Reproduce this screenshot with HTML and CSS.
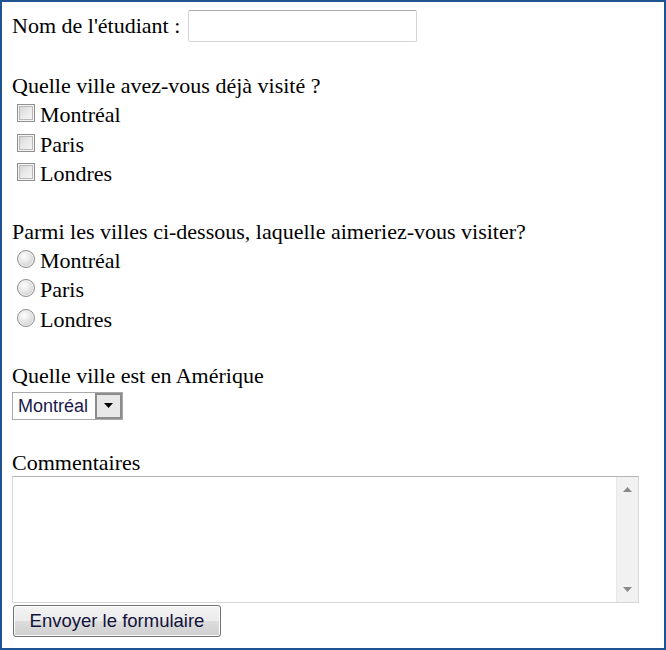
FILE: index.html
```html
<!DOCTYPE html>
<html lang="fr">
<head>
<meta charset="utf-8">
<title>Formulaire</title>
<link rel="stylesheet" href="styles.css">
</head>
<body>
<form class="frame">
  <div class="row-name">
    <label class="lbl" for="nom">Nom de l'étudiant :</label>
    <input class="txt" id="nom" type="text">
  </div>

  <div class="group g1">
    <div class="q">Quelle ville avez-vous déjà visité ?</div>
    <label class="opt"><input class="cb" type="checkbox"><span>Montréal</span></label>
    <label class="opt"><input class="cb" type="checkbox"><span>Paris</span></label>
    <label class="opt"><input class="cb" type="checkbox"><span>Londres</span></label>
  </div>

  <div class="group g2">
    <div class="q">Parmi les villes ci-dessous, laquelle aimeriez-vous visiter?</div>
    <label class="opt"><input class="rd" type="radio" name="v"><span>Montréal</span></label>
    <label class="opt"><input class="rd" type="radio" name="v"><span>Paris</span></label>
    <label class="opt"><input class="rd" type="radio" name="v"><span>Londres</span></label>
  </div>

  <div class="group g3">
    <div class="q">Quelle ville est en Amérique</div>
    <div class="sel">
      <select class="sel-input">
        <option>Montréal</option>
        <option>Paris</option>
        <option>Londres</option>
      </select>
      <span class="sel-btn"><svg width="9" height="5" viewBox="0 0 9 5"><path d="M0 0H9L4.5 5Z" fill="#000"/></svg></span>
    </div>
  </div>

  <div class="group g4">
    <div class="q q-short">Commentaires</div>
    <div class="ta">
      <textarea class="ta-input"></textarea>
      <div class="ta-bar">
        <svg width="9" height="5" viewBox="0 0 9 5"><path d="M0 5H9L4.5 0Z" fill="#8a8a8a"/></svg>
        <svg width="9" height="5" viewBox="0 0 9 5"><path d="M0 0H9L4.5 5Z" fill="#8a8a8a"/></svg>
      </div>
    </div>
  </div>

  <div class="actions">
    <button class="btn" type="button">Envoyer le formulaire</button>
  </div>
</form>
</body>
</html>
```

FILE: styles.css
```css
html, body {
  margin: 0;
  padding: 0;
  background: #fff;
}

.frame {
  box-sizing: border-box;
  width: 666px;
  height: 650px;
  border: 2px solid #205391;
  padding: 8px 10px 0 10px;
  font-family: "Liberation Serif", "Times New Roman", serif;
  font-size: 22px;
  color: #000;
  line-height: 29.3px;
}

.row-name {
  display: flex;
  align-items: center;
  height: 32px;
}

.txt {
  box-sizing: border-box;
  width: 229px;
  height: 32px;
  margin: 0 0 0 8px;
  border: 1px solid #d3d5da;
  border-top-color: #a9abae;
  border-radius: 2px;
  background: #fff;
  padding: 0 4px;
  font: 16px "Liberation Sans", Arial, sans-serif;
  outline: none;
}

.group { margin-top: 29px; }
.g2 { margin-top: 28.5px; }
.g3 { margin-top: 27.5px; }
.g4 { margin-top: 28px; }

.q { height: 29.3px; }
.q-short { height: 28.3px; }

.opt {
  display: flex;
  align-items: center;
  height: 29.3px;
}

.cb, .rd {
  appearance: none;
  -webkit-appearance: none;
  box-sizing: border-box;
  width: 18px;
  height: 18px;
  margin: 0 5px 3px 5px;
  flex: none;
}

.cb {
  border: 1px solid #8f8f8f;
  background: linear-gradient(135deg, #cfcfcf 0%, #e9e9e9 50%, #f7f7f7 100%);
  box-shadow: inset 0 0 0 1px #f4f4f4, inset 0 0 0 2px #b9b9b9;
}

.rd {
  border: 1px solid #8d8d8d;
  border-radius: 50%;
  background: radial-gradient(circle at 40% 35%, #ffffff 0%, #e4e4e4 45%, #c4c4c4 100%);
  box-shadow: inset 0 0 0 1px #f2f2f2;
}

.sel {
  display: inline-flex;
  box-sizing: border-box;
  width: 111px;
  height: 28px;
  border: 1px solid #a9a9a9;
  background: #fff;
  margin-top: 1px;
  vertical-align: top;
}

.sel-input {
  appearance: none;
  -webkit-appearance: none;
  flex: 1;
  min-width: 0;
  border: none;
  background: transparent;
  padding: 0 0 0 5px;
  margin: 0;
  font: 18px "Liberation Sans", Arial, sans-serif;
  color: #1a1a4a;
  outline: none;
}

.sel-btn {
  box-sizing: border-box;
  width: 27px;
  height: 26px;
  border: 2px solid #8c8c8c;
  background: #e8e8e8;
  display: flex;
  align-items: center;
  justify-content: center;
  flex: none;
}

.ta {
  display: flex;
  box-sizing: border-box;
  width: 627px;
  height: 127px;
  border: 1px solid #d4d6da;
  border-top-color: #b3b5b8;
  background: #fff;
}

.ta-input {
  flex: 1;
  border: none;
  resize: none;
  outline: none;
  margin: 0;
  padding: 2px;
  font: 16px "Liberation Mono", monospace;
  overflow: hidden;
}

.ta-bar {
  width: 22px;
  flex: none;
  background: #f1f1f1;
  border-left: 1px solid #e8e8e8;
  display: flex;
  flex-direction: column;
  justify-content: space-between;
  align-items: center;
  padding: 10px 0 10px;
  box-sizing: border-box;
}

.actions {
  margin-top: 2px;
  line-height: normal;
}

.btn {
  box-sizing: border-box;
  width: 208px;
  height: 32px;
  margin-left: 1px;
  border: 1px solid #707070;
  border-radius: 3px;
  background: linear-gradient(#f3f3f3 0%, #ebebeb 50%, #dddddd 51%, #cfcfcf 100%);
  box-shadow: inset 0 0 0 1px #fcfcfc;
  font: 18.5px "Liberation Sans", Arial, sans-serif;
  color: #12123a;
  padding: 0;
}
```
